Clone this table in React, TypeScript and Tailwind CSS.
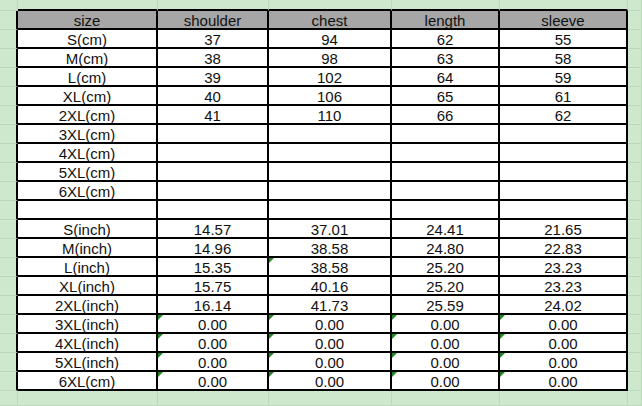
const header = ['size', 'shoulder', 'chest', 'length', 'sleeve'];

const rows: string[][] = [
  ['S(cm)', '37', '94', '62', '55'],
  ['M(cm)', '38', '98', '63', '58'],
  ['L(cm)', '39', '102', '64', '59'],
  ['XL(cm)', '40', '106', '65', '61'],
  ['2XL(cm)', '41', '110', '66', '62'],
  ['3XL(cm)', '', '', '', ''],
  ['4XL(cm)', '', '', '', ''],
  ['5XL(cm)', '', '', '', ''],
  ['6XL(cm)', '', '', '', ''],
  ['', '', '', '', ''],
  ['S(inch)', '14.57', '37.01', '24.41', '21.65'],
  ['M(inch)', '14.96', '38.58', '24.80', '22.83'],
  ['L(inch)', '15.35', '38.58', '25.20', '23.23'],
  ['XL(inch)', '15.75', '40.16', '25.20', '23.23'],
  ['2XL(inch)', '16.14', '41.73', '25.59', '24.02'],
  ['3XL(inch)', '0.00', '0.00', '0.00', '0.00'],
  ['4XL(inch)', '0.00', '0.00', '0.00', '0.00'],
  ['5XL(inch)', '0.00', '0.00', '0.00', '0.00'],
  ['6XL(cm)', '0.00', '0.00', '0.00', '0.00'],
];

// cells that carry the little green "number stored as text" marker
const flagged = (r: number, c: number) => {
  if (c === 0) return false;
  if (r === 12 && c === 2) return true;
  return r >= 15;
};

const Blank = ({ edge = '' }: { edge?: string }) => (
  <div className={`border-r border-b border-[#bcd9bc] ${edge}`} />
);

const Cell = ({ text, head, flag }: { text: string; head?: boolean; flag?: boolean }) => (
  <div
    className={`relative flex items-center justify-center border-r-2 border-b-2 border-black pt-[1px] leading-none ${
      head ? 'bg-[#a6a6a6]' : 'bg-white'
    }`}
  >
    {flag && (
      <span className="absolute left-0 top-0 h-0 w-0 border-t-[5px] border-r-[5px] border-t-[#1f8a1f] border-r-transparent" />
    )}
    {text}
  </div>
);

export default function App() {
  return (
    <div className="grid h-[406px] w-[642px] overflow-hidden bg-[#cde8cd] font-['Liberation_Sans',Arial,sans-serif] text-[15px] text-[#111] grid-cols-[18px_140px_111px_123px_108px_128px_1fr] grid-rows-[11px_repeat(20,19px)_1fr]">
      {/* top margin row */}
      <Blank />
      {header.map((h) => (
        <div key={h} className="border-r border-b-2 border-r-[#bcd9bc] border-b-black" />
      ))}
      <Blank />

      {/* header */}
      <Blank edge="!border-r-2 !border-r-black" />
      {header.map((h) => (
        <Cell key={h} text={h} head />
      ))}
      <Blank />

      {rows.map((row, r) => (
        <div key={r} className="contents">
          <Blank edge="!border-r-2 !border-r-black" />
          {row.map((v, c) => (
            <Cell key={c} text={v} flag={flagged(r, c)} />
          ))}
          <Blank />
        </div>
      ))}

      {/* bottom margin */}
      {Array.from({ length: 7 }).map((_, i) => (
        <Blank key={i} />
      ))}
    </div>
  );
}
